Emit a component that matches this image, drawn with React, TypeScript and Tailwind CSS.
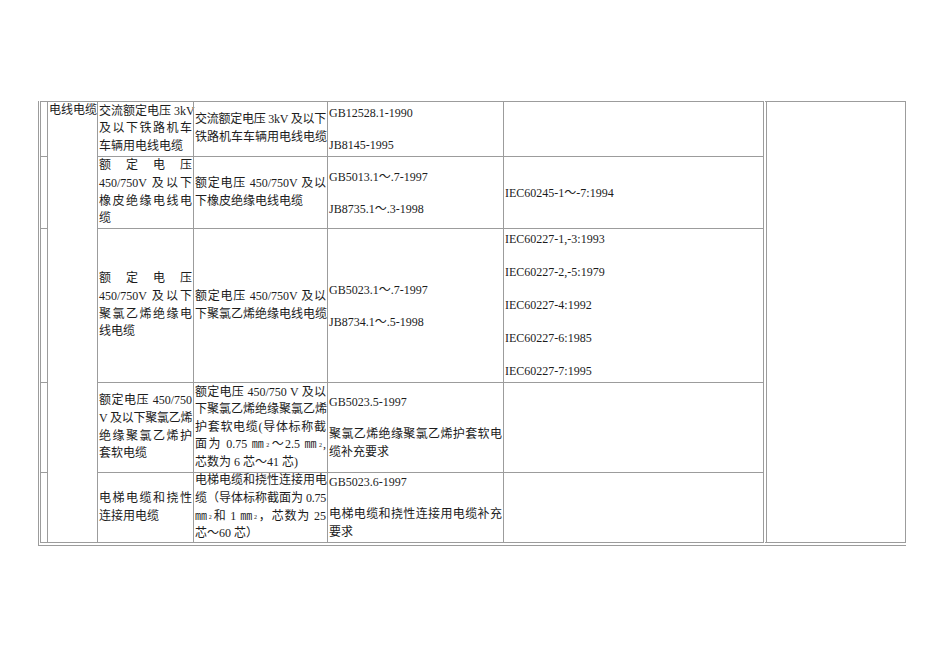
import React from "react";

/* ─── Cable standards table ─── */

type LineProps = { children: React.ReactNode; j?: boolean; tight?: boolean; h?: "cjk" | "latin" | "iec" };

function Line({ children, j = false, tight = false, h = "cjk" }: LineProps) {
  const height = h === "cjk" ? "h-[17.6px] leading-[17.6px]" : h === "iec" ? "h-[16.5px] leading-[16.5px]" : "h-[16px] leading-[16px]";
  return (
    <div className={`whitespace-nowrap ${height} ${j ? "text-justify [text-align-last:justify]" : "text-left"} ${tight ? "tracking-[-0.25px]" : ""}`}>
      {children}
    </div>
  );
}

const Sq = () => (
  <>
    ㎜<span className="inline-block text-[6px] leading-none mx-[1px] align-[1px]">2</span>
  </>
);

function Cell({ children, className = "", top = false }: { children?: React.ReactNode; className?: string; top?: boolean }) {
  return (
    <div className={`flex flex-col ${top ? "justify-start" : "justify-center"} border-l border-t border-[#9c9c9c] pl-px pr-px overflow-visible ${className}`}>
      {children}
    </div>
  );
}

export default function App() {
  return (
    <div className="min-h-[672px] bg-white font-['Liberation_Serif','Noto_Sans_CJK_SC',serif] text-[12px] text-[#1c1c1c]">
      <div className="ml-[38px] pt-[101px]">
        <div className="w-max border-l border-b border-[#9c9c9c] pl-px pb-[2px]">
          <div className="grid grid-cols-[7px_50px_96px_134px_176px_260px_143px] grid-rows-[55px_72px_154px_90px_71px]">
            {/* row 1 */}
            <Cell />
            <Cell top className="row-span-5 border-b">
              <Line>电线电缆</Line>
            </Cell>
            <Cell>
              <Line j>交流额定电压 3kV</Line>
              <Line j>及以下铁路机车</Line>
              <Line>车辆用电线电缆</Line>
            </Cell>
            <Cell>
              <Line j tight>交流额定电压 3kV 及以下</Line>
              <Line>铁路机车车辆用电线电缆</Line>
            </Cell>
            <Cell>
              <Line h="latin">GB12528.1-1990</Line>
              <Line h="latin">&nbsp;</Line>
              <Line h="latin">JB8145-1995</Line>
            </Cell>
            <Cell />
            <Cell className="row-span-5 border-b border-r border-l-[4px] border-double" />

            {/* row 2 */}
            <Cell />
            <Cell>
              <Line j>额定电压</Line>
              <Line j>450/750V 及以下</Line>
              <Line j>橡皮绝缘电线电</Line>
              <Line>缆</Line>
            </Cell>
            <Cell>
              <Line j>额定电压 450/750V 及以</Line>
              <Line>下橡皮绝缘电线电缆</Line>
            </Cell>
            <Cell>
              <Line h="latin">GB5013.1～.7-1997</Line>
              <Line h="latin">&nbsp;</Line>
              <Line h="latin">JB8735.1～.3-1998</Line>
            </Cell>
            <Cell>
              <Line h="latin">IEC60245-1～-7:1994</Line>
            </Cell>

            {/* row 3 */}
            <Cell />
            <Cell>
              <Line j>额定电压</Line>
              <Line j>450/750V 及以下</Line>
              <Line j>聚氯乙烯绝缘电</Line>
              <Line>线电缆</Line>
            </Cell>
            <Cell>
              <Line j>额定电压 450/750V 及以</Line>
              <Line>下聚氯乙烯绝缘电线电缆</Line>
            </Cell>
            <Cell>
              <Line h="latin">GB5023.1～.7-1997</Line>
              <Line h="latin">&nbsp;</Line>
              <Line h="latin">JB8734.1～.5-1998</Line>
            </Cell>
            <Cell>
              <Line h="iec">IEC60227-1,-3:1993</Line>
              <Line h="iec">&nbsp;</Line>
              <Line h="iec">IEC60227-2,-5:1979</Line>
              <Line h="iec">&nbsp;</Line>
              <Line h="iec">IEC60227-4:1992</Line>
              <Line h="iec">&nbsp;</Line>
              <Line h="iec">IEC60227-6:1985</Line>
              <Line h="iec">&nbsp;</Line>
              <Line h="iec">IEC60227-7:1995</Line>
            </Cell>

            {/* row 4 */}
            <Cell />
            <Cell>
              <Line j>额定电压 450/750</Line>
              <Line j tight>V 及以下聚氯乙烯</Line>
              <Line j>绝缘聚氯乙烯护</Line>
              <Line>套软电缆</Line>
            </Cell>
            <Cell>
              <Line j>额定电压 450/750 V 及以</Line>
              <Line j>下聚氯乙烯绝缘聚氯乙烯</Line>
              <Line j>护套软电缆(导体标称截</Line>
              <Line j>
                面为 0.75 <Sq />～2.5 <Sq />,
              </Line>
              <Line>芯数为 6 芯～41 芯)</Line>
            </Cell>
            <Cell>
              <Line h="latin">GB5023.5-1997</Line>
              <Line h="latin">&nbsp;</Line>
              <Line j>聚氯乙烯绝缘聚氯乙烯护套软电</Line>
              <Line>缆补充要求</Line>
            </Cell>
            <Cell />

            {/* row 5 */}
            <Cell className="border-b" />
            <Cell className="border-b">
              <Line j>电梯电缆和挠性</Line>
              <Line>连接用电缆</Line>
            </Cell>
            <Cell className="border-b">
              <Line j>电梯电缆和挠性连接用电</Line>
              <Line j tight>缆（导体标称截面为 0.75</Line>
              <Line j>
                <Sq />和 1 <Sq />，芯数为 25
              </Line>
              <Line>芯～60 芯）</Line>
            </Cell>
            <Cell className="border-b">
              <Line h="latin">GB5023.6-1997</Line>
              <Line h="latin">&nbsp;</Line>
              <Line j>电梯电缆和挠性连接用电缆补充</Line>
              <Line>要求</Line>
            </Cell>
            <Cell className="border-b" />
          </div>
        </div>
      </div>
    </div>
  );
}
